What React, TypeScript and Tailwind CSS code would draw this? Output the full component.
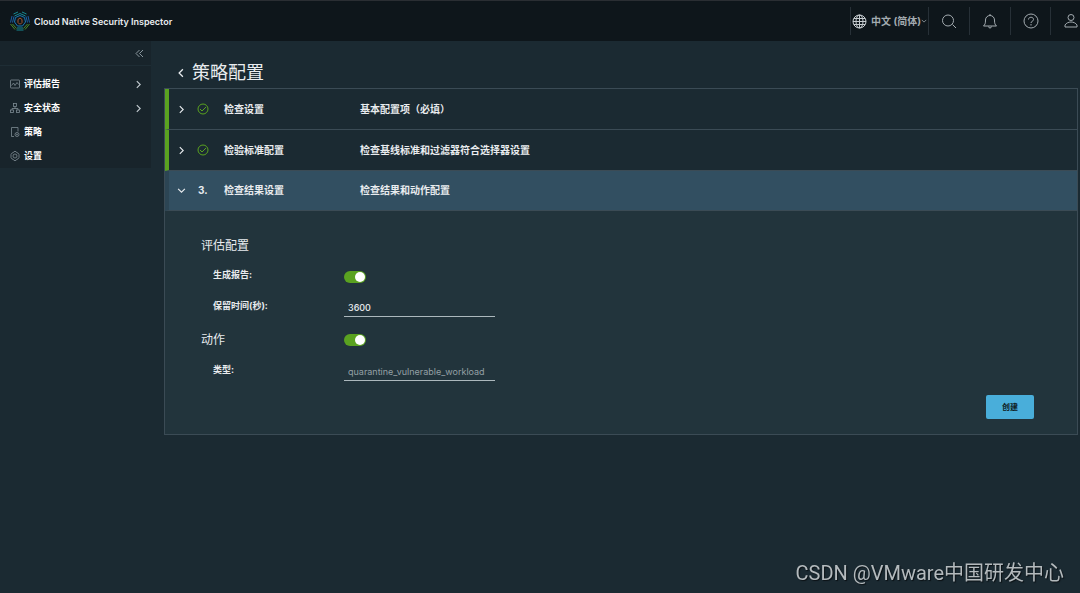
import { useState } from 'react';

const navItems = [
  { label: '评估报告', icon: 'report', expandable: true },
  { label: '安全状态', icon: 'tree', expandable: true },
  { label: '策略', icon: 'policy', expandable: false },
  { label: '设置', icon: 'gear', expandable: false },
];

const steps = [
  { title: '检查设置', description: '基本配置项（必填）' },
  { title: '检验标准配置', description: '检查基线标准和过滤器符合选择器设置' },
];

function Logo() {
  return (
    <svg className="w-5 h-5" viewBox="0 0 40 40" fill="none" strokeWidth="2">
      <path d="m7 6 9-4M24 2l9 4M9 10l11-5 11 5" stroke="#178a93" />
      <path d="M4 10 1 23M8 11 5 23M36 10l3 13M32 11l3 12" stroke="#1d5c9e" />
      <path d="m1 26 9 11M5 26l8 9M39 26l-9 11M35 26l-8 9" stroke="#4c8a2a" />
      <path d="M13 38h14M14 34h12" stroke="#178a93" />
      <path d="m20 9 9 4 2 9-6 8H15l-6-8 2-9z" stroke="#1a78b5" />
      <path d="m20 14 4 3v6l-3 3h-2l-3-3v-6z" stroke="#a9572f" />
    </svg>
  );
}

function NavIcon({ name }: { name: string }) {
  return (
    <svg
      className="w-[10px] h-[10px] text-[#7d8b93]"
      viewBox="0 0 20 20"
      fill="none"
      stroke="currentColor"
      strokeWidth="1.6"
    >
      {name === 'report' && (
        <>
          <rect x="1" y="2" width="18" height="16" rx="1" />
          <path d="m3 13 4-5 3 5 4-6 3 4" />
        </>
      )}
      {name === 'tree' && (
        <>
          <rect x="7" y="1" width="6" height="6" />
          <rect x="1" y="14" width="6" height="5" />
          <rect x="13" y="14" width="6" height="5" />
          <path d="M10 7v4M4 14v-3h12v3" />
        </>
      )}
      {name === 'policy' && (
        <>
          <path d="M8 19H3V1h13v8" />
          <circle cx="14" cy="15" r="4" />
          <circle cx="14" cy="15" r="1" />
        </>
      )}
      {name === 'gear' && (
        <>
          <path d="m8 1-1 2-3 1-2 3v6l2 3 3 1 1 2h4l1-2 3-1 2-3V7l-2-3-3-1-1-2z" />
          <circle cx="10" cy="10" r="4" />
        </>
      )}
    </svg>
  );
}

function Chevron({ className }: { className: string }) {
  return (
    <svg className={className} viewBox="0 0 16 16" fill="none" stroke="currentColor" strokeWidth="2">
      <path d="m5 2 6 6-6 6" />
    </svg>
  );
}

function CheckIcon() {
  return (
    <svg className="w-3 h-3 text-[#5aa220]" viewBox="0 0 24 24" fill="none" stroke="currentColor" strokeWidth="2">
      <circle cx="12" cy="12" r="10" />
      <path d="m6 12 4 4 8-8" />
    </svg>
  );
}

function Toggle({ id, label }: { id: string; label?: string }) {
  const [on, setOn] = useState(true);

  return (
    <input
      id={id}
      type="checkbox"
      role="switch"
      aria-label={label}
      checked={on}
      onChange={(e) => setOn(e.target.checked)}
      className="block appearance-none w-[22px] h-3 p-px rounded-full bg-[#6a7a81] checked:bg-[#5aa220] before:block before:w-[10px] before:h-[10px] before:rounded-full before:bg-white checked:before:ml-[10px]"
    />
  );
}

export default function App() {
  const [retention, setRetention] = useState('3600');
  const [actionType, setActionType] = useState('quarantine_vulnerable_workload');

  return (
    <div className="min-h-screen flex flex-col bg-[#1b2a32] text-[#e9ecef] font-['Inter','Noto_Sans_CJK_SC',sans-serif]">
      {/* Header */}
      <header className="flex items-center h-[41px] shrink-0 bg-[#0e161b] border-t border-[#2a2e33] overflow-hidden">
        <a href="#" className="flex items-center gap-1 pl-[10px] text-[9px] font-semibold">
          <Logo />
          <span className="pt-px leading-4">Cloud Native Security Inspector</span>
        </a>
        <div className="ml-auto flex h-7 text-[#a3abb0]">
          <button className="flex items-center justify-center gap-1 w-[78px] border-l border-[#273037] text-[10px] font-bold whitespace-nowrap">
            <svg className="w-[15px] h-[15px] shrink-0" viewBox="0 0 30 30" fill="none" stroke="#c5cbcf" strokeWidth="2">
              <circle cx="15" cy="15" r="13" />
              <ellipse cx="15" cy="15" rx="7" ry="13" />
              <path d="M15 2v26M2 15h26M4 9h22M4 21h22" />
            </svg>
            <span className="flex items-center">
              中文 (简体)
              <Chevron className="w-[6px] h-[6px] rotate-90" />
            </span>
          </button>
          <button aria-label="搜索" className="flex items-center justify-center w-[41px] border-l border-[#273037]">
            <svg className="w-4 h-4" viewBox="0 0 32 32" fill="none" stroke="currentColor" strokeWidth="2">
              <circle cx="14" cy="15" r="11" />
              <path d="m23 23 7 7" />
            </svg>
          </button>
          <button aria-label="通知" className="flex items-center justify-center w-[41px] border-l border-[#273037]">
            <svg className="w-4 h-4" viewBox="0 0 32 32" fill="none" stroke="currentColor" strokeWidth="2">
              <path d="M16 2v3M3 26h26c-3-3-4-5-4-12 0-5-4-9-9-9s-9 4-9 9c0 7-1 9-4 12zM13 27c0 4 6 4 6 0" />
            </svg>
          </button>
          <button aria-label="帮助" className="flex items-center justify-center w-10 border-l border-[#273037]">
            <svg className="w-4 h-4" viewBox="0 0 32 32" fill="none" stroke="currentColor" strokeWidth="2">
              <circle cx="16" cy="16" r="14" />
              <path d="M11 13c0-6 10-6 10 0 0 4-5 3-5 7M16 22v3" />
            </svg>
          </button>
          <button aria-label="用户" className="flex items-center w-[30px] pl-3 border-l border-[#273037]">
            <svg className="w-4 h-4 shrink-0" viewBox="0 0 32 32" fill="none" stroke="currentColor" strokeWidth="2">
              <circle cx="16" cy="9" r="6" />
              <path d="M4 28v-4c5-8 19-8 24 0v4z" />
            </svg>
          </button>
        </div>
      </header>

      <div className="flex flex-1">
        {/* Side navigation */}
        <nav className="self-start w-[151px] shrink-0 bg-[#18242b]">
          <div className="flex items-center justify-end h-[25px] pr-[7px] mb-[6px] border-b border-[#1e2d35]">
            <button aria-label="收起" className="text-[#8b989f]">
              <svg className="w-[9px] h-[9px]" viewBox="0 0 18 18" fill="none" stroke="currentColor" strokeWidth="2">
                <path d="M9 2 2 9l7 7M16 2 9 9l7 7" />
              </svg>
            </button>
          </div>
          <ul>
            {navItems.map((item) => (
              <li key={item.label}>
                <a href="#" className="flex items-center gap-1 h-6 pl-[10px] pr-2 text-[9px] font-bold text-white">
                  <NavIcon name={item.icon} />
                  {item.label}
                  {item.expandable && <Chevron className="w-[9px] h-[9px] ml-auto text-[#c3ccd1]" />}
                </a>
              </li>
            ))}
          </ul>
        </nav>

        {/* Policy wizard */}
        <main className="flex-1 min-w-0 pl-[13px] pr-[2px] pt-[18px]">
          <div className="flex items-center gap-1 h-[27px] pl-3 mb-[2px]">
            <button aria-label="返回">
              <Chevron className="w-[10px] h-[10px] rotate-180" />
            </button>
            <h1 className="pl-[2px] text-[18px] leading-6">策略配置</h1>
          </div>

          <div className="border border-[#3b4b55] bg-[#22343c]">
            {steps.map((step) => (
              <button
                key={step.title}
                className="flex items-center w-full h-[41px] pl-2 text-left text-[10px] font-bold bg-[#1b2a32] border-l-4 border-l-[#5aa220] border-b border-b-[#3b4b55]"
              >
                <Chevron className="w-[9px] h-[9px] mr-[11px]" />
                <span className="w-[27px]">
                  <CheckIcon />
                </span>
                <span className="w-[136px]">{step.title}</span>
                <span>{step.description}</span>
              </button>
            ))}
            <button
              aria-expanded="true"
              className="flex items-center w-full h-10 pl-2 text-left text-[10px] font-bold bg-[#324f61] border-l-4 border-l-[#2c4554] border-b border-b-[#3b4b55]"
            >
              <Chevron className="w-[9px] h-[9px] mr-[11px] rotate-90" />
              <span className="w-[27px] pl-px">3.</span>
              <span className="w-[136px]">检查结果设置</span>
              <span>检查结果和动作配置</span>
            </button>

            <form className="pt-[19px] pb-[15px] pl-9 pr-[43px] text-[9px]" onSubmit={(e) => e.preventDefault()}>
              <h2 className="flex items-center h-[31px] text-[12px]">评估配置</h2>
              <div className="flex items-center h-[31px]">
                <label htmlFor="report" className="w-[143px] pl-3 pb-1 font-bold">
                  生成报告:
                </label>
                <Toggle id="report" />
              </div>
              <div className="flex items-center h-8">
                <label htmlFor="retention" className="w-[143px] pl-3 pb-1 font-bold">
                  保留时间(秒):
                </label>
                <input
                  id="retention"
                  type="text"
                  value={retention}
                  onChange={(e) => setRetention(e.target.value)}
                  className="w-[151px] h-[18px] px-1 border-b border-[#acb8bd] font-medium outline-none"
                />
              </div>
              <div className="flex items-center h-8">
                <h2 className="w-[143px] text-[12px]">动作</h2>
                <Toggle id="action" label="动作" />
              </div>
              <div className="flex items-center h-[31px]">
                <label htmlFor="type" className="w-[143px] pl-3 pb-1 font-bold">
                  类型:
                </label>
                <input
                  id="type"
                  type="text"
                  value={actionType}
                  onChange={(e) => setActionType(e.target.value)}
                  className="w-[151px] h-[18px] px-1 border-b border-[#acb8bd] text-[#94a0a5] outline-none"
                />
              </div>
              <div className="flex justify-end pt-2">
                <button type="submit" className="w-12 h-6 rounded-xs bg-[#49aeda] text-[8px] font-bold text-[#0e1b22]">
                  创建
                </button>
              </div>
            </form>
          </div>
        </main>
      </div>

      {/* Watermark */}
      <p className="fixed right-4 bottom-1 text-[20px] leading-8 text-[#b4babd] whitespace-nowrap [text-shadow:1px_1px_1px_#0b1115] font-['Roboto','Noto_Sans_CJK_SC',sans-serif]">
        CSDN @VMware中国研发中心
      </p>
    </div>
  );
}
